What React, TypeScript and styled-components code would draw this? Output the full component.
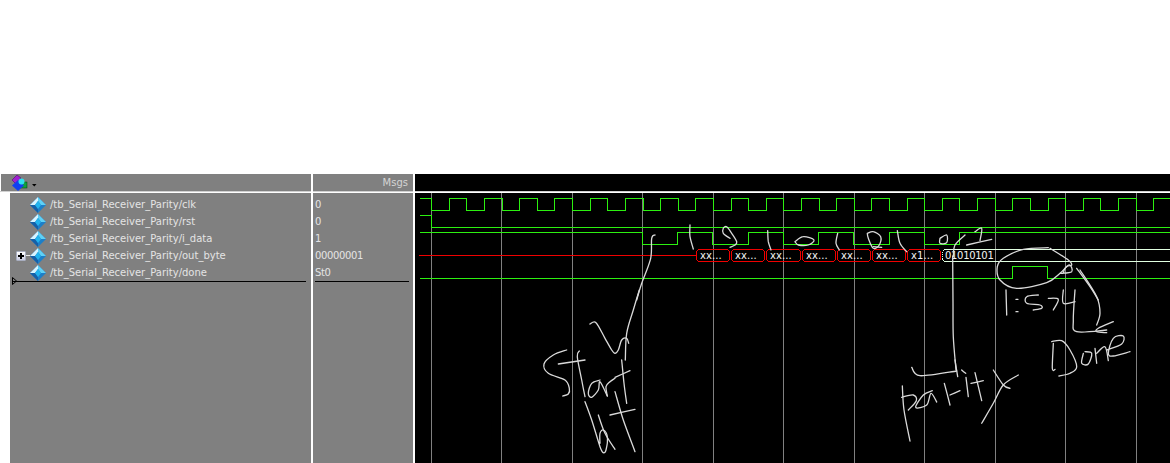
import styled, { createGlobalStyle } from 'styled-components'

const GlobalStyle = createGlobalStyle`
    html, body {
        margin: 0;
        background: #ffffff;
        overflow: hidden;
    }
`

const uiFont = `"DejaVu Sans", "Liberation Sans", sans-serif`

const Page = styled.div`
    height: 463px;
    padding-top: 174px;
    box-sizing: border-box;
    display: grid;
    grid-template-columns: 311px 100px 755px;
    column-gap: 2px;
    font-family: ${uiFont};
    font-size: 10px;
    color: #e4e4e4;
    overflow: hidden;
`

const Column = styled.div`
    display: flex;
    flex-direction: column;
    min-width: 0;
`

const HeaderCell = styled.div<{ $dark?: boolean; $inset?: boolean }>`
    height: 17px;
    flex: none;
    box-sizing: border-box;
    margin-left: ${p => (p.$inset ? '1px' : '0')};
    background: ${p => (p.$dark ? '#000000' : '#808080')};
    display: flex;
    align-items: center;
    justify-content: ${p => (p.$inset ? 'flex-start' : 'flex-end')};
    padding: 0 5px 0 11px;
    color: #d4d4d4;
`

const HeaderRule = styled.div`
    height: 2px;
    flex: none;
    background: linear-gradient(#d0d0d0 50%, #ffffff 50%);
`

const PanelBody = styled.div<{ $gutter?: boolean }>`
    flex: 1;
    margin-left: ${p => (p.$gutter ? '10px' : '0')};
    background: #808080;
    padding-top: 3px;
`

const SignalList = styled.div<{ $values?: boolean }>`
    position: relative;
    margin: ${p => (p.$values ? '0 4px 0 2px' : '0 5px 0 2px')};
    letter-spacing: ${p => (p.$values ? '-0.35px' : '0')};
    border-bottom: 1px solid #000000;
`

const SignalRow = styled.div`
    height: 17px;
    display: flex;
    align-items: center;
    position: relative;
    white-space: nowrap;
`

const SignalIconSlot = styled.span`
    width: 16px;
    height: 16px;
    margin: 0 4px 0 18px;
    flex: none;
    display: flex;
`

const ExpandBox = styled.span`
    position: absolute;
    left: 4px;
    top: 4px;
    width: 10px;
    height: 10px;
    box-sizing: border-box;
    background: linear-gradient(#ffffff, #c8cbe0);
    border: 1px solid #a8aec0;
    border-radius: 1px;
    &::before {
        content: '';
        position: absolute;
        left: 1px;
        top: 3px;
        width: 6px;
        height: 2px;
        background: #000000;
    }
    &::after {
        content: '';
        position: absolute;
        left: 3px;
        top: 1px;
        width: 2px;
        height: 6px;
        background: #000000;
    }
`

const ExpandStem = styled.span`
    position: absolute;
    left: 14px;
    top: 8px;
    width: 4px;
    height: 1px;
    background: #e8e8e8;
`

const CursorMark = styled.svg`
    position: absolute;
    left: 0;
    bottom: -4px;
`

const Wave = styled.svg`
    display: block;
    flex: 1;
    background: #000000;
    font-family: ${uiFont};
    font-size: 10px;
`

const BusText = styled.text<{ $digits?: boolean }>`
    fill: #f4f4f4;
    letter-spacing: ${p => (p.$digits ? '-0.3px' : '0.1px')};
`

type Pt = [number, number]

// smooth pen stroke through the points
const smooth = (pts: Pt[]) => {
    let d = `M${pts[0][0]} ${pts[0][1]}`
    for (let i = 0; i < pts.length - 1; i++) {
        const a = pts[Math.max(i - 1, 0)]
        const b = pts[i]
        const c = pts[i + 1]
        const e = pts[Math.min(i + 2, pts.length - 1)]
        const c1 = [b[0] + (c[0] - a[0]) / 6, b[1] + (c[1] - a[1]) / 6]
        const c2 = [c[0] - (e[0] - b[0]) / 6, c[1] - (e[1] - b[1]) / 6]
        d += `C${c1[0].toFixed(1)} ${c1[1].toFixed(1)} ${c2[0].toFixed(1)} ${c2[1].toFixed(1)} ${c[0].toFixed(1)} ${c[1].toFixed(1)}`
    }
    return d
}

// strokes were read off 3x crops, so map them back
const crop = (x: number, y: number, strokes: number[][][]): Pt[][] =>
    strokes.map(s => s.map(([a, b]) => [x + a / 3, y + b / 3] as Pt))

const startBit = crop(520, 290, [
    [[358, 0], [340, 60], [320, 130], [316, 210]],
    [[210, 102], [228, 98], [255, 145], [275, 180], [285, 190], [295, 180], [305, 150], [320, 145], [326, 160]],
    [[140, 180], [100, 195], [72, 222], [85, 250], [135, 270], [148, 295], [145, 312], [128, 318]],
    [[115, 222], [195, 210]],
    [[178, 183], [172, 200], [185, 270], [195, 320]],
    [[240, 270], [215, 280], [205, 310], [215, 322], [235, 300], [240, 275], [262, 318]],
    [[262, 318], [258, 290], [270, 275], [285, 265]],
    [[305, 210], [312, 280], [320, 340]],
    [[285, 262], [330, 242]],
    [[195, 335], [215, 390], [240, 470], [250, 488], [258, 480], [262, 440], [250, 420], [240, 430], [240, 460]],
    [[235, 375], [255, 430], [285, 478]],
    [[285, 305], [310, 390], [345, 485]],
    [[270, 375], [345, 358]],
])

const startArrow = crop(415, 170, [
    [[720, 195], [710, 205], [707, 265], [680, 340], [665, 390]],
    [[825, 165], [825, 200], [835, 237]],
    [[945, 205], [925, 190], [925, 175], [935, 170], [950, 190], [965, 215], [960, 225], [945, 232]],
    [[1058, 182], [1060, 215], [1068, 240]],
])

const bitMarks = crop(790, 170, [
    [[15, 215], [40, 200], [72, 210], [55, 225], [25, 225], [15, 215]],
    [[143, 190], [138, 220], [148, 240]],
    [[232, 190], [250, 185], [272, 200], [268, 225], [250, 235], [235, 205], [232, 190]],
    [[250, 230], [275, 232]],
    [[322, 182], [330, 220], [350, 245]],
    [[450, 205], [470, 195], [470, 218], [450, 220], [450, 205]],
    [[490, 260], [495, 225], [525, 195]],
    [[555, 185], [575, 175], [570, 212]],
    [[530, 225], [605, 208]],
    [[775, 233], [700, 238], [640, 265], [622, 290], [630, 330], [680, 355], [770, 338], [810, 310], [830, 290], [845, 285], [835, 270], [780, 235]],
    [[812, 310], [845, 305], [840, 285], [825, 295], [820, 310]],
    [[860, 295], [900, 350], [925, 390]],
])

const parityWord = crop(895, 360, [
    [[50, 22], [75, 47], [185, 33]],
    [[180, 0], [188, 50]],
    [[22, 78], [27, 150], [45, 243]],
    [[20, 112], [55, 105], [64, 122], [40, 150]],
    [[112, 92], [85, 105], [62, 142], [95, 135], [108, 100], [125, 126]],
    [[148, 70], [165, 135]],
    [[165, 105], [195, 92]],
    [[213, 52], [220, 110]],
    [[200, 30], [212, 40]],
    [[240, 38], [260, 122]],
    [[228, 70], [265, 62]],
    [[295, 30], [325, 75], [345, 85]],
    [[370, 45], [325, 75], [295, 130], [260, 190]],
])

const doneNote = crop(880, 270, [
    [[218, -42], [219, 100], [220, 200], [228, 300]],
    [[515, 215], [545, 212], [570, 240], [590, 290], [570, 310], [537, 318]],
    [[520, 220], [517, 295], [525, 298]],
    [[610, 250], [605, 280], [625, 282], [635, 250], [615, 245]],
    [[645, 235], [650, 280]],
    [[650, 250], [675, 230], [685, 272]],
    [[680, 240], [725, 222], [730, 198], [700, 205], [685, 250], [700, 258], [750, 245]],
    [[378, 60], [380, 135]],
    [[408, 88], [414, 88]],
    [[408, 125], [414, 125]],
    [[475, 75], [440, 80], [440, 100], [480, 105], [485, 115], [460, 120]],
    [[505, 85], [535, 88], [520, 120]],
    [[550, 60], [550, 100], [585, 95]],
    [[585, 60], [580, 150], [590, 185], [680, 180]],
    [[700, 155], [655, 175], [650, 185], [680, 188]],
    [[600, 0], [650, 80], [660, 130], [650, 165]],
])

const inkStrokes = [...startBit, ...startArrow, ...bitMarks, ...parityWord, ...doneNote]

const gridLines = Array.from({ length: 11 }, (_, i) => Math.round(431 + i * 70.45) + 0.5)

const HALF_PERIOD = 17.61

const clockPath = () => {
    let d = 'M420 198.5H431.5V210.5'
    let high = false
    for (let x = 448.8; x < 1190; x += HALF_PERIOD) {
        d += `H${Math.round(x) + 0.5}V${high ? 210.5 : 198.5}`
        high = !high
    }
    return d
}

const dataEdges = [642, 677.5, 712.5, 748, 783, 818.5, 853.5, 889, 924, 959.5]

const dataPath = () => {
    let d = 'M420 232.5'
    let low = false
    dataEdges.forEach(x => {
        d += `H${Math.floor(x) + 0.5}V${low ? 232.5 : 244.5}`
        low = !low
    })
    return `${d}H1170`
}

const busStarts = [696, 731, 766, 802, 837, 872, 907, 942]
const busLabels = ['xx...', 'xx...', 'xx...', 'xx...', 'xx...', 'xx...', 'x1...']

const signals = [
    { name: '/tb_Serial_Receiver_Parity/clk', value: '0' },
    { name: '/tb_Serial_Receiver_Parity/rst', value: '0' },
    { name: '/tb_Serial_Receiver_Parity/i_data', value: '1' },
    { name: '/tb_Serial_Receiver_Parity/out_byte', value: '00000001', group: true },
    { name: '/tb_Serial_Receiver_Parity/done', value: 'St0' },
]

const SignalIcon = () => (
    <svg width="16" height="16" viewBox="0 0 16 16">
        <path d="M8 0L16 8L8 16L0 8Z" fill="#1d7fc8" />
        <path d="M8 0L16 8H11L8 4Z" fill="#5fd0f5" />
        <path d="M8 0L0 8H5L8 4Z" fill="#d8f4ff" />
        <path d="M0 8L8 16V12L5 8Z" fill="#1560a8" />
        <path d="M8 4L11 8L8 12L5 8Z" fill="#22b4ee" />
    </svg>
)

const ToolIcon = () => (
    <svg width="26" height="17" viewBox="0 0 26 17">
        <path d="M0 6L5 1L9 4L4 10Z" fill="#a020d0" stroke="#400060" strokeWidth="0.5" />
        <rect x="8" y="8" width="7" height="6" fill="#10a040" stroke="#004000" strokeWidth="0.5" />
        <path d="M6 6L12 11.5L6 17L0 11.5Z" fill="#1040f0" />
        <circle cx="9.5" cy="7.5" r="3" fill="#30e0f0" />
        <path d="M20 10H24.5L22.3 12.5Z" fill="#000000" />
    </svg>
)

const App = () => (
    <>
        <GlobalStyle />
        <Page>
            <Column>
                <HeaderCell $inset>
                    <ToolIcon />
                </HeaderCell>
                <HeaderRule />
                <PanelBody $gutter>
                    <SignalList>
                        {signals.map(s => (
                            <SignalRow key={s.name}>
                                {s.group && (
                                    <>
                                        <ExpandBox />
                                        <ExpandStem />
                                    </>
                                )}
                                <SignalIconSlot>
                                    <SignalIcon />
                                </SignalIconSlot>
                                <span>{s.name}</span>
                            </SignalRow>
                        ))}
                        <CursorMark width="5" height="8" viewBox="0 0 5 8">
                            <path d="M0.5 0.5L4.5 4L0.5 7.5Z" fill="none" stroke="#000000" />
                        </CursorMark>
                    </SignalList>
                </PanelBody>
            </Column>
            <Column>
                <HeaderCell>Msgs</HeaderCell>
                <HeaderRule />
                <PanelBody>
                    <SignalList $values>
                        {signals.map(s => (
                            <SignalRow key={s.name}>{s.value}</SignalRow>
                        ))}
                    </SignalList>
                </PanelBody>
            </Column>
            <Column>
                <HeaderCell $dark />
                <HeaderRule />
                <Wave viewBox="415 193 755 270" width="755" height="270">
                    <g stroke="#808080" shapeRendering="crispEdges">
                        {gridLines.map(x => (
                            <line key={x} x1={x} x2={x} y1="193" y2="463" />
                        ))}
                    </g>
                    <g fill="none" stroke="#2cf010" shapeRendering="crispEdges">
                        <path d={clockPath()} />
                        <path d="M420 215.5H431.5V227.5H1170" />
                        <path d={dataPath()} />
                        <path d="M420 278.5H1012.5V266.5H1047.5V278.5H1170" />
                    </g>
                    <path d="M419 255.5H696" stroke="#f00000" shapeRendering="crispEdges" />
                    <g fill="none" stroke="#f00000" shapeRendering="crispEdges">
                        {busLabels.map((_, i) => {
                            const a = busStarts[i]
                            const b = busStarts[i + 1] - 2
                            return (
                                <path
                                    key={a}
                                    d={`M${a + 2.5} 249.5H${b - 1.5}L${b + 0.5} 251.5V259.5L${b - 1.5} 261.5H${a + 2.5}L${a + 0.5} 259.5V251.5Z`}
                                />
                            )
                        })}
                    </g>
                    <path
                        d="M1170 249.5H944.5L942.5 251.5M942.5 259.5L944.5 261.5H1170"
                        fill="none"
                        stroke="#e0ffe0"
                        shapeRendering="crispEdges"
                    />
                    <path d="M942.5 251.5V259.5" stroke="#e0ffe0" strokeDasharray="1 1" shapeRendering="crispEdges" />
                    {busLabels.map((label, i) => (
                        <BusText key={busStarts[i]} x={busStarts[i] + 4} y="259">
                            {label}
                        </BusText>
                    ))}
                    <BusText $digits x="945" y="259">01010101</BusText>
                    <g fill="none" stroke="#dadada" strokeWidth="1.3" strokeLinecap="round" strokeLinejoin="round">
                        {inkStrokes.map((s, i) => (
                            <path key={i} d={smooth(s)} />
                        ))}
                    </g>
                </Wave>
            </Column>
        </Page>
    </>
)

export default App
